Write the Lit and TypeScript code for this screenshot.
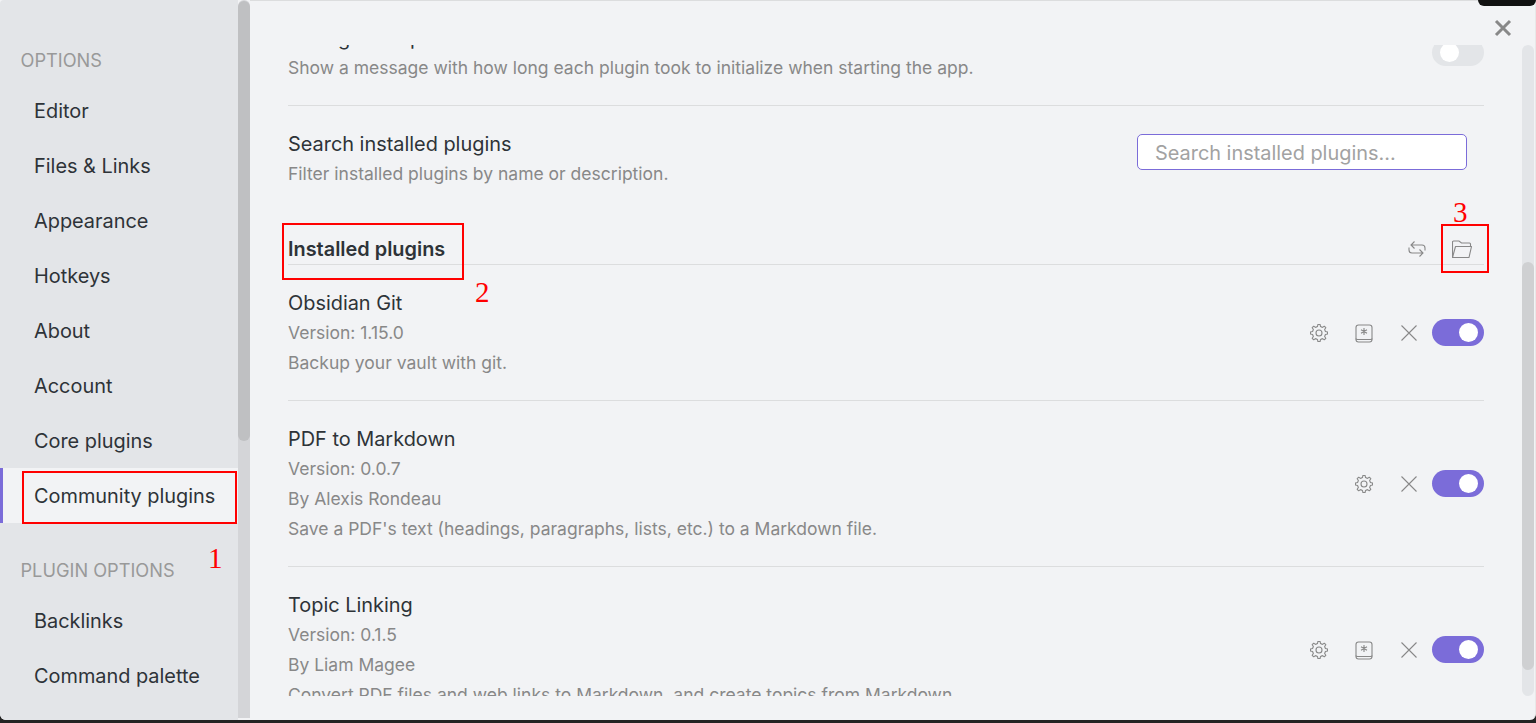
import { LitElement, html, css, svg } from 'lit';
import { customElement } from 'lit/decorators.js';

// eight rounded teeth around (9,9)
function gearPath() {
  const pts: string[] = [];
  const teeth = 8;
  for (let i = 0; i < teeth; i++) {
    const a = (i / teeth) * Math.PI * 2 - Math.PI / 2;
    const step = (Math.PI * 2) / teeth;
    const corners: [number, number][] = [
      [6.6, a - step * 0.3],
      [8.6, a - step * 0.16],
      [8.6, a + step * 0.16],
      [6.6, a + step * 0.3],
    ];
    for (const [r, t] of corners) {
      pts.push(`${(9 + r * Math.cos(t)).toFixed(2)} ${(9 + r * Math.sin(t)).toFixed(2)}`);
    }
  }
  return `M${pts.join('L')}Z`;
}

const gear = svg`<path d=${gearPath()} stroke-linejoin="round"/><circle cx="9" cy="9" r="3"/>`;
const hotkey = svg`<rect x="1" y="1" width="16" height="17" rx="2.500"/><path d="M1 14.500c0 .6.800 1 1.500 1h13c.7 0 1.500-.4 1.500-1"/><path d="M9 4v7M6 5.800l6 3.400M12 5.800l-6 3.400"/>`;
const cross = svg`<path d="M1.500 1.500l15 15M16.500 1.500l-15 15"/>`;
const refresh = svg`<path d="M6.500 1.500L3 5l3.500 3.500M3 5h11a3 3 0 0 1 3 3v2.500M11.500 9.500L15 13l-3.500 3.500M15 13H4a3 3 0 0 1-3-3V7.500"/>`;
const folder = svg`<path d="M.5 17.500V2a1 1 0 0 1 1-1h5.500l2.500 2h8a1 1 0 0 1 1 1v2.500"/><path d="M.5 17.500h16.500l2.500-11H3.500z" stroke-linejoin="round"/>`;

interface Plugin {
  name: string;
  lines: string[];
  hotkey: boolean;
}

const plugins: Plugin[] = [
  { name: 'Obsidian Git', lines: ['Version: 1.15.0', 'Backup your vault with git.'], hotkey: true },
  {
    name: 'PDF to Markdown',
    lines: ['Version: 0.0.7', 'By Alexis Rondeau', "Save a PDF's text (headings, paragraphs, lists, etc.) to a Markdown file."],
    hotkey: false,
  },
  {
    name: 'Topic Linking',
    lines: ['Version: 0.1.5', 'By Liam Magee', 'Convert PDF files and web links to Markdown, and create topics from Markdown.'],
    hotkey: true,
  },
];

const options = ['Editor', 'Files & Links', 'Appearance', 'Hotkeys', 'About', 'Account', 'Core plugins', 'Community plugins'];
const pluginOptions = ['Backlinks', 'Command palette'];

@customElement('app-root')
export class AppRoot extends LitElement {
  static styles = css`
    :host {
      display: block;
      position: relative;
      width: 1536px;
      height: 723px;
      overflow: hidden;
      background: #232323;
      font-family: Inter, 'Liberation Sans', sans-serif;
      font-size: 19.9px;
      line-height: 30px;
      color: #2e3338;
    }
    .modal {
      display: flex;
      width: 1536px;
      height: 720px;
      box-sizing: border-box;
      overflow: hidden;
      border-right: 1px solid #e8e8e8;
      border-radius: 0 0 6px 6px;
      background: #f2f3f5;
    }

    .sidebar {
      width: 238px;
      flex: none;
      padding-top: 45px;
      box-sizing: border-box;
      overflow: hidden;
      background: #e3e5e8;
      border-top-left-radius: 4px;
    }
    .group {
      padding-left: 20.500px;
      margin-bottom: 8px;
      font-size: 18.200px;
      color: #999;
    }
    .group.second {
      margin-top: 32px;
    }
    .item {
      height: 55px;
      padding-left: 34px;
      display: flex;
      align-items: center;
      box-sizing: border-box;
    }
    .item.active {
      background: #f2f3f5;
      box-shadow: inset 3px 0 0 #7b6cd9;
    }

    .rail {
      width: 12px;
      flex: none;
      display: flex;
      flex-direction: column;
      margin-bottom: 2px;
      border-radius: 6px 6px 0 0;
      background: #d4d5d8;
    }
    .rail-thumb {
      height: 440px;
      margin-top: 1px;
      border-radius: 6px;
      background: #bfc0c2;
    }

    .main {
      flex: 1;
      min-width: 0;
      display: flex;
      padding: 44px 1px 24px 38px;
      border-top: 1px solid #dcddde;
    }
    .scroller {
      width: 1196px;
      overflow: hidden;
    }
    .scroll-inner {
      margin-top: -45px;
    }
    .setting {
      display: flex;
      justify-content: space-between;
      padding: 23px 0 22px;
      border-bottom: 1px solid #dcddde;
    }
    .setting.plain {
      border-bottom: none;
    }
    .setting:last-child {
      border-bottom: none;
    }
    .info {
      min-width: 0;
    }
    .desc {
      font-size: 17.500px;
      color: #888;
    }
    .controls {
      display: flex;
      align-items: center;
    }
    .icon {
      width: 45px;
      height: 30px;
      display: flex;
      align-items: center;
      justify-content: center;
    }
    .icon svg {
      fill: none;
      stroke: #888;
      stroke-width: 1.100;
    }
    .search {
      width: 330px;
      height: 36px;
      margin: 5px 17px 0 0;
      padding: 2px 0 0 17px;
      box-sizing: border-box;
      display: flex;
      align-items: center;
      background: #fff;
      border: 1px solid #7b6cd9;
      border-radius: 5px;
      color: #a2a2a2;
    }
    .heading {
      display: flex;
      justify-content: space-between;
      margin-top: 23px;
      border-bottom: 1px solid #dcddde;
      font-weight: 600;
    }

    .toggle {
      width: 52px;
      height: 27px;
      margin: 0 0 1px 1px;
      box-sizing: border-box;
      display: flex;
      align-items: center;
      justify-content: flex-end;
      padding: 0 6px;
      border-radius: 14px;
      background: #7b6cd9;
    }
    .toggle.off {
      justify-content: flex-start;
      padding: 0 8px;
      background: #e3e5e8;
    }
    .knob {
      width: 19px;
      height: 19px;
      border-radius: 50%;
      background: #fff;
    }

    .bar {
      width: 12px;
      flex: none;
      margin-left: 38px;
      display: flex;
      flex-direction: column;
      border-radius: 6px;
      background: #e3e5e8;
    }
    .bar-thumb {
      height: 408px;
      margin-top: 217px;
      border-radius: 6px;
      background: #cfd0d2;
    }

    .close {
      position: absolute;
      left: 1494px;
      top: 19px;
      width: 18px;
      height: 18px;
      fill: none;
      stroke: #888;
      stroke-width: 3;
    }
    .notch {
      position: absolute;
      right: 0;
      top: -8px;
      width: 58px;
      height: 14px;
      border-radius: 6px;
      background: #111;
    }
    .mark {
      position: absolute;
      box-sizing: border-box;
      border: 2px solid #f00;
    }
    .mark.one {
      left: 22px;
      top: 471px;
      width: 215px;
      height: 53px;
    }
    .mark.two {
      left: 282px;
      top: 223px;
      width: 182px;
      height: 57px;
    }
    .mark.three {
      left: 1441px;
      top: 224px;
      width: 48px;
      height: 49px;
    }
    .num {
      position: absolute;
      font-family: 'Liberation Serif', serif;
      font-size: 29px;
      line-height: 30px;
      color: #f00;
    }
    .num.one {
      left: 208px;
      top: 543px;
    }
    .num.two {
      left: 475px;
      top: 277px;
    }
    .num.three {
      left: 1453px;
      top: 197px;
    }
  `;

  private icon(content: unknown, w = 18, h = 18) {
    return html`<div class="icon">
      <svg width=${w} height=${h} viewBox="0 0 ${w} ${h}">${content}</svg>
    </div>`;
  }

  private renderPlugin(p: Plugin) {
    return html`<div class="setting">
      <div class="info">
        <div>${p.name}</div>
        ${p.lines.map((l) => html`<div class="desc">${l}</div>`)}
      </div>
      <div class="controls">
        ${this.icon(gear)} ${p.hotkey ? this.icon(hotkey, 18, 19) : ''} ${this.icon(cross)}
        <div class="toggle"><div class="knob"></div></div>
      </div>
    </div>`;
  }

  render() {
    return html`
      <div class="modal">
        <div class="sidebar">
          <div class="group">OPTIONS</div>
          ${options.map((o) => html`<div class="item ${o === 'Community plugins' ? 'active' : ''}">${o}</div>`)}
          <div class="group second">PLUGIN OPTIONS</div>
          ${pluginOptions.map((o) => html`<div class="item">${o}</div>`)}
        </div>
        <div class="rail"><div class="rail-thumb"></div></div>
        <div class="main">
          <div class="scroller">
            <div class="scroll-inner">
              <div class="setting">
                <div class="info">
                  <div>Debug startup time</div>
                  <div class="desc">Show a message with how long each plugin took to initialize when starting the app.</div>
                </div>
                <div class="controls">
                  <div class="toggle off"><div class="knob"></div></div>
                </div>
              </div>
              <div class="setting plain">
                <div class="info">
                  <div>Search installed plugins</div>
                  <div class="desc">Filter installed plugins by name or description.</div>
                </div>
                <div class="search">Search installed plugins...</div>
              </div>
              <div class="heading">
                <div>Installed plugins</div>
                <div class="controls">${this.icon(refresh)} ${this.icon(folder, 20, 18)}</div>
              </div>
              ${plugins.map((p) => this.renderPlugin(p))}
            </div>
          </div>
          <div class="bar"><div class="bar-thumb"></div></div>
        </div>
      </div>

      <div class="notch"></div>
      <svg class="close" viewBox="0 0 18 18"><path d="M2 2l14 14M16 2L2 16" /></svg>
      <div class="mark one"></div>
      <div class="mark two"></div>
      <div class="mark three"></div>
      <div class="num one">1</div>
      <div class="num two">2</div>
      <div class="num three">3</div>
    `;
  }
}
